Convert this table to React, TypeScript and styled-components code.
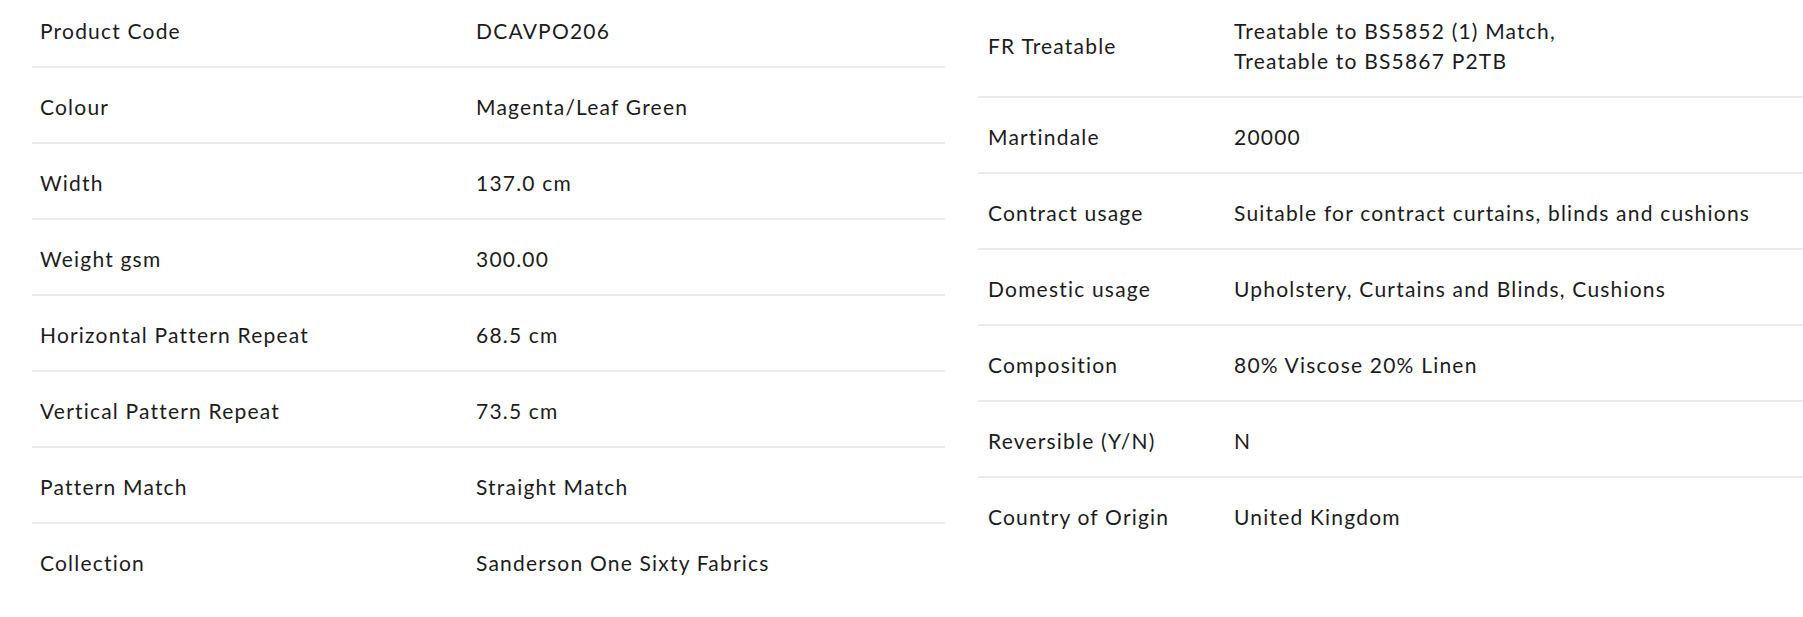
import React from "react";
import styled, { createGlobalStyle } from "styled-components";

const GlobalStyle = createGlobalStyle`
  html, body {
    margin: 0;
    padding: 0;
    background: #ffffff;
    overflow: hidden;
  }
  body {
    font-family: Lato, "Noto Sans", sans-serif;
    color: #1c1c1c;
  }
`;

const Page = styled.div`
  display: flex;
  align-items: flex-start;
  gap: 33px;
  width: 1803px;
  margin-top: -8px;
  padding-left: 32px;
  box-sizing: border-box;
`;

const Table = styled.div<{ $width?: number }>`
  display: flex;
  flex-direction: column;
  ${(p) => (p.$width ? `width: ${p.$width}px; flex: none;` : `flex: 1; min-width: 0;`)}
`;

const Row = styled.div<{ $labelWidth: number; $pad: number }>`
  display: grid;
  grid-template-columns: ${(p) => p.$labelWidth}px 1fr;
  padding: 24px 0 20px ${(p) => p.$pad}px;
  border-bottom: 2px solid #ebebeb;
  font-size: 21px;
  letter-spacing: 1.2px;
  line-height: 30px;
  &:last-child {
    border-bottom: none;
  }
`;

const Label = styled.div`
  align-self: center;
  white-space: nowrap;
`;

const Value = styled.div`
  white-space: nowrap;
`;

type Spec = [string, string[]];

const left: Spec[] = [
  ["Product Code", ["DCAVPO206"]],
  ["Colour", ["Magenta/Leaf Green"]],
  ["Width", ["137.0 cm"]],
  ["Weight gsm", ["300.00"]],
  ["Horizontal Pattern Repeat", ["68.5 cm"]],
  ["Vertical Pattern Repeat", ["73.5 cm"]],
  ["Pattern Match", ["Straight Match"]],
  ["Collection", ["Sanderson One Sixty Fabrics"]],
];

const right: Spec[] = [
  ["FR Treatable", ["Treatable to BS5852 (1) Match,", "Treatable to BS5867 P2TB"]],
  ["Martindale", ["20000"]],
  ["Contract usage", ["Suitable for contract curtains, blinds and cushions"]],
  ["Domestic usage", ["Upholstery, Curtains and Blinds, Cushions"]],
  ["Composition", ["80% Viscose 20% Linen"]],
  ["Reversible (Y/N)", ["N"]],
  ["Country of Origin", ["United Kingdom"]],
];

const SpecTable = ({
  rows,
  width,
  labelWidth,
  pad,
}: {
  rows: Spec[];
  width?: number;
  labelWidth: number;
  pad: number;
}) => (
  <Table $width={width}>
    {rows.map(([label, values]) => (
      <Row key={label} $labelWidth={labelWidth} $pad={pad}>
        <Label>{label}</Label>
        <Value>
          {values.map((v) => (
            <div key={v}>{v}</div>
          ))}
        </Value>
      </Row>
    ))}
  </Table>
);

export default function App() {
  return (
    <>
      <GlobalStyle />
      <Page>
        <SpecTable rows={left} width={913} labelWidth={436} pad={8} />
        <SpecTable rows={right} labelWidth={246} pad={10} />
      </Page>
    </>
  );
}
